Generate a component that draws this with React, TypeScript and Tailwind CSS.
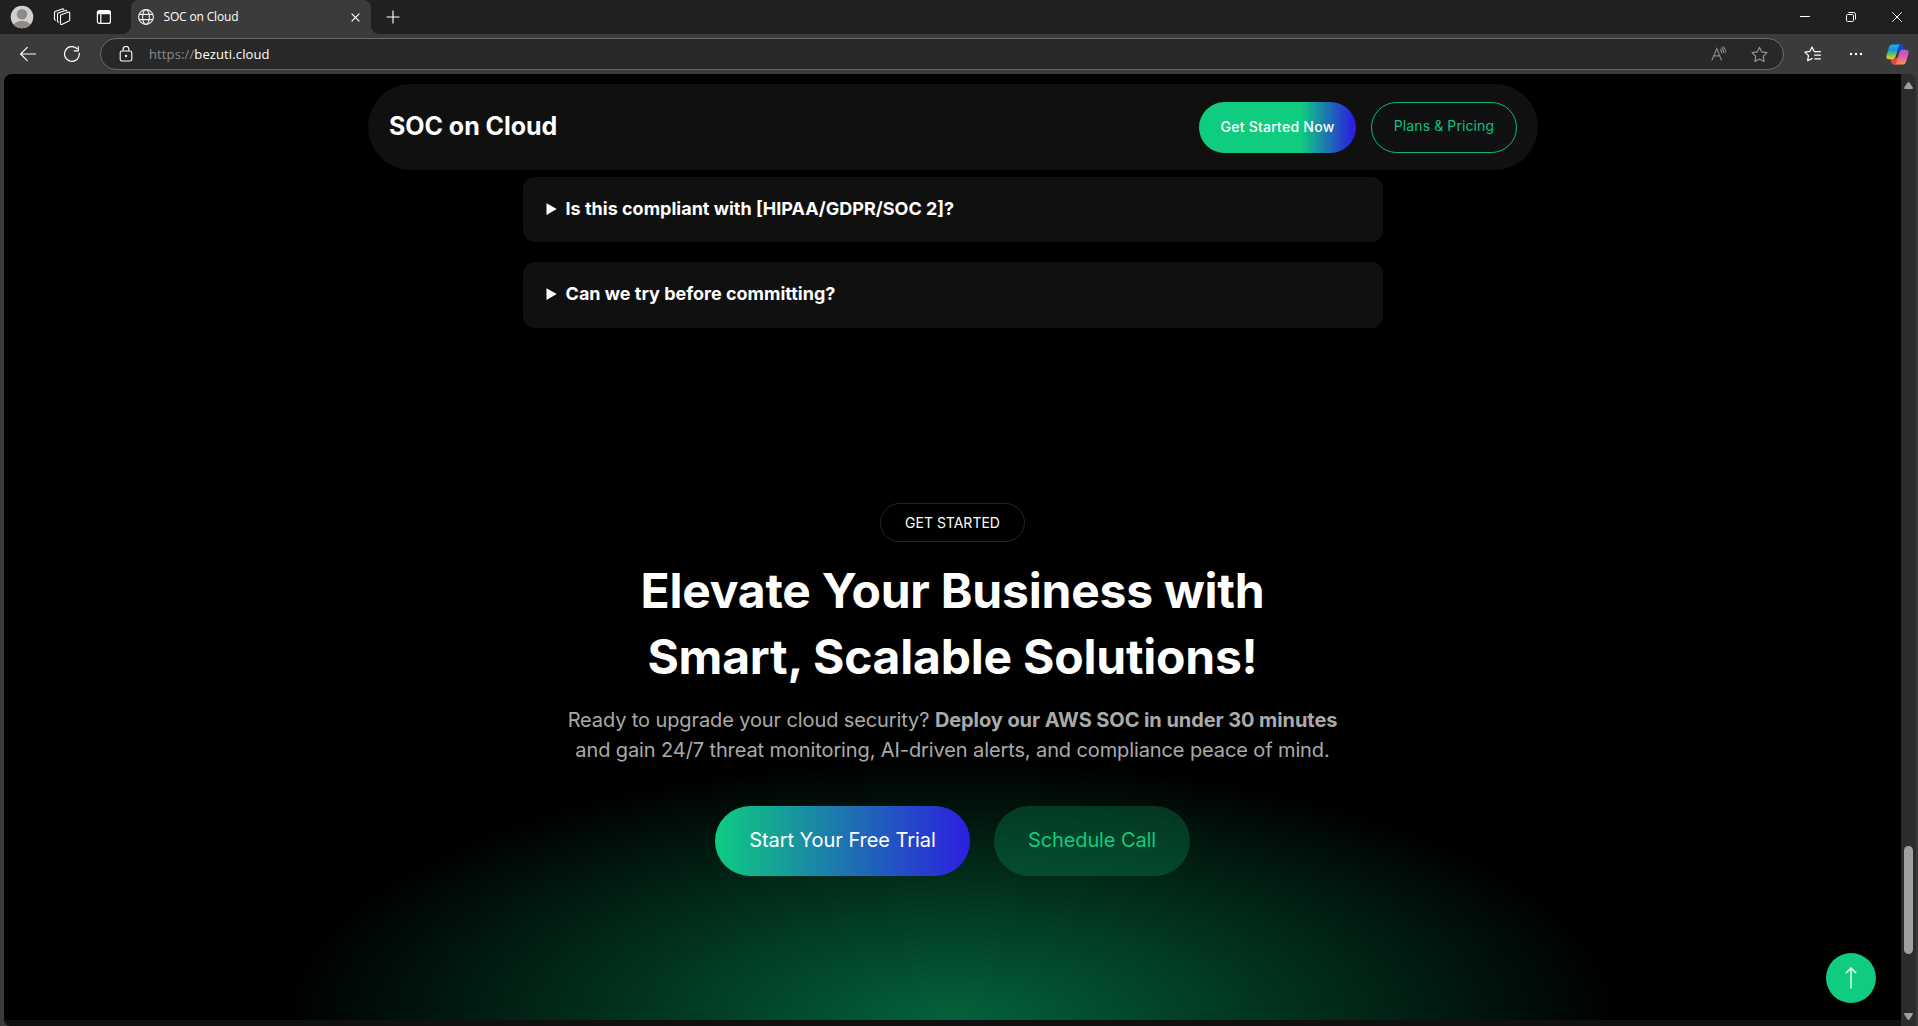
import React from "react";

function TabStrip() {
  return (
    <div className="flex h-[34px] shrink-0 items-center bg-[#202020] text-white">
      <svg className="ml-[10px] shrink-0" width="24" height="24" viewBox="0 0 24 24">
        <defs>
          <clipPath id="avatar">
            <circle cx="12" cy="12" r="11.3" />
          </clipPath>
        </defs>
        <circle cx="12" cy="12" r="11.3" fill="#d2d0ce" />
        <g clipPath="url(#avatar)" fill="#8e8a87">
          <circle cx="12" cy="9.3" r="5.2" />
          <path d="M3 24c0-6 3.5-8 9-8s9 2 9 8z" />
        </g>
      </svg>
      <svg className="ml-[19px] shrink-0" width="18" height="18" viewBox="0 0 18 18" fill="none" stroke="currentColor" strokeWidth="1.1" strokeLinejoin="round" strokeLinecap="round">
        <path d="M7.500 7.800Q7.500 7 8.200 6.700L15.500 4.100Q16.700 3.900 16.700 5V11.800Q16.700 12.700 15.900 13.100L8.800 16.400Q7.500 16.900 7.500 15.600z" />
        <path d="M5.600 14.200Q4.500 14 4.500 12.900V6.200Q4.500 5.400 5.200 5.100L12.300 2.400Q13.400 2.100 13.800 2.900" />
        <path d="M2.500 12.200Q1.500 11.900 1.500 11V4.700Q1.500 3.900 2.200 3.600L9.200 1Q10.200.7 10.700 1.400" />
      </svg>
      <svg className="ml-[25px] shrink-0" width="16" height="16" viewBox="0 0 16 16" fill="none" stroke="currentColor" strokeWidth="1.2">
        <rect x="1.400" y="1.600" width="13" height="12.800" rx="2" />
        <path d="M2 2.600h12v2H2z" fill="currentColor" />
        <path d="M4.800 5v9" />
      </svg>
      <div className="relative ml-[19px] flex h-[34px] w-[240px] shrink-0 items-center rounded-t-[8px] bg-[#3b3b3b]">
        <span className="absolute bottom-0 -left-2 size-2 bg-[radial-gradient(circle_at_0_0,#202020_7.5px,#3b3b3b_8px)]" />
        <span className="absolute -right-2 bottom-0 size-2 bg-[radial-gradient(circle_at_100%_0,#202020_7.5px,#3b3b3b_8px)]" />
        <svg className="ml-[7px] shrink-0" width="16" height="16" viewBox="0 0 16 16" fill="none" stroke="#f0f0f0" strokeWidth="1.1">
          <circle cx="8" cy="8" r="7.4" />
          <ellipse cx="8" cy="8" rx="3.4" ry="7.4" />
          <path d="M1.2 5.4h13.6M1.2 10.6h13.6" />
        </svg>
        <span className="ml-[9.5px] flex-1 font-['Open_Sans',sans-serif] text-[12px] leading-4 tracking-[-0.16px] whitespace-nowrap">SOC on Cloud</span>
        <svg className="mt-px mr-[11px] shrink-0" width="9" height="9" viewBox="0 0 9 9" stroke="currentColor" strokeWidth="1.2">
          <path d="m.6.6 7.8 7.8M8.4.6.6 8.4" />
        </svg>
      </div>
      <svg className="ml-[14.5px] shrink-0" width="14" height="14" viewBox="0 0 14 14" stroke="currentColor" strokeWidth="1.1">
        <path d="M7 .5v13M.5 7h13" />
      </svg>
      <div className="ml-auto flex items-center">
        <svg width="10" height="10" viewBox="0 0 10 10" stroke="currentColor">
          <path d="M0 4.5h10" />
        </svg>
        <svg className="ml-9" width="10" height="10" viewBox="0 0 10 10" fill="none" stroke="currentColor">
          <rect x=".5" y="2.5" width="7" height="7" rx="1.2" />
          <path d="M2.4.5h5.3A1.8 1.8 0 0 1 9.5 2.3v5.3" />
        </svg>
        <svg className="mr-4 ml-9" width="10" height="10" viewBox="0 0 10 10" stroke="currentColor">
          <path d="m.3.3 9.4 9.4M9.7.3.3 9.7" />
        </svg>
      </div>
    </div>
  );
}

const STAR = "M8 1.2 10.1 5.6l4.9.7-3.5 3.4.8 4.9L8 12.3l-4.3 2.3.8-4.9L1 6.3l4.9-.7z";

function Toolbar() {
  return (
    <div className="flex h-10 shrink-0 items-center bg-[#3b3b3b] text-white">
      <svg className="ml-5 shrink-0" width="16" height="16" viewBox="0 0 16 16" fill="none" stroke="currentColor" strokeWidth="1.1" strokeLinecap="round" strokeLinejoin="round">
        <path d="M15.5 8H.6M7.3 1.3.6 8l6.7 6.7" />
      </svg>
      <svg className="ml-[28px] shrink-0" width="16" height="16" viewBox="0 0 16 16" fill="none" stroke="currentColor" strokeWidth="1.2" strokeLinecap="round">
        <path d="M15.3 7.3A7.4 7.4 0 1 1 12.9 2.5M14.300.7v4.200H10.200" />
      </svg>
      <div className="ml-5 flex h-8 w-[1684px] shrink-0 items-center rounded-full border border-[#6a6a6a] bg-[#282828]">
        <svg className="ml-[18px] shrink-0" width="14" height="16" viewBox="0 0 14 16" fill="none" stroke="currentColor" strokeWidth="1.1">
          <rect x="1.2" y="5" width="11.6" height="10" rx="1.8" />
          <path d="M4.1 5V3.4a2.9 2.9 0 0 1 5.8 0V5" />
          <circle cx="7" cy="10" r=".6" fill="currentColor" />
        </svg>
        <span className="ml-[16px] font-['Open_Sans',sans-serif] text-[13px] leading-5 tracking-[0.12px] text-white">
          <span className="text-[#8a8a8a]">https://</span>bezuti.cloud
        </span>
        <svg className="ml-auto shrink-0" width="16" height="16" viewBox="0 0 16 16" fill="none" stroke="#8c8c8c" strokeWidth="1.1" strokeLinecap="round">
          <path d="M1 14 5.800 2.500l4.600 11.500M2.700 9.900h6.200" />
          <path d="M9.300 3.600a5 5 0 0 1 1.500 3.400M10.600 1.900a8 8 0 0 1 2.300 4.900M12.200.8a10 10 0 0 1 2.600 5.200" />
        </svg>
        <svg className="mr-[15px] ml-[24px] shrink-0" width="17" height="17" viewBox="0 0 16 16" fill="none" stroke="#969696" strokeWidth="1.1" strokeLinejoin="round">
          <path d={STAR} />
        </svg>
      </div>
      <svg className="ml-5 shrink-0" width="17" height="17" viewBox="0 0 17 17" fill="none" stroke="currentColor" strokeWidth="1.2" strokeLinejoin="round" strokeLinecap="round">
        <path d="M12 5.6 10.2 5.4 8 1 5.8 5.4.9 6.1l3.6 3.6-.9 5L8 12.6" />
        <path d="M10.7 5.7h5.7M10.7 9.2h5.7M10.7 12.8h5.7" />
      </svg>
      <svg className="ml-7 shrink-0" width="14" height="4" viewBox="0 0 14 4" fill="currentColor">
        <circle cx="2" cy="2" r="1.2" />
        <circle cx="7" cy="2" r="1.2" />
        <circle cx="12" cy="2" r="1.2" />
      </svg>
      <svg className="ml-[23px] shrink-0" width="23" height="21" viewBox="0 0 23 21">
        <defs>
          <linearGradient id="cpA" x1="0" y1="0" x2="0" y2="1">
            <stop offset="0" stopColor="#1fb6f2" />
            <stop offset=".35" stopColor="#1692dc" />
            <stop offset=".65" stopColor="#5fbf6a" />
            <stop offset="1" stopColor="#f5cf1b" />
          </linearGradient>
          <linearGradient id="cpB" x1="0" y1="0" x2="0" y2="1">
            <stop offset="0" stopColor="#9b5cf0" />
            <stop offset=".45" stopColor="#e557a5" />
            <stop offset="1" stopColor="#ff9556" />
          </linearGradient>
        </defs>
        <path d="M11 .5h4.500c1 0 1.500.6 1.800 1.500L18.500 6h-4l-3 2z" fill="#1746c9" />
        <path d="M12 20.500H7.500c-1 0-1.600-.7-1.900-1.500L4.500 15h4l3-2z" fill="#f0452d" />
        <path d="M6.500.5h8c-1.200.3-1.700 1.200-2 2.200L9.900 12c-.5 1.900-1.700 3.300-3.500 3.300H3.200C.8 15.300-.1 13.700.5 11.400L2.900 3.600C3.500 1.700 4.500.5 6.500.5z" fill="url(#cpA)" />
        <path d="M16.500 20.500h-8c1.200-.3 1.700-1.200 2-2.200L13.100 9c.5-1.900 1.700-3.300 3.500-3.300h3.200c2.400 0 3.300 1.600 2.700 3.900l-2.400 7.800c-.6 1.900-1.600 3.100-3.600 3.100z" fill="url(#cpB)" />
      </svg>
    </div>
  );
}

function SiteHeader() {
  return (
    <header className="mt-[10px] flex h-[86px] w-[1170px] items-center rounded-full bg-[#101010] pr-[20.5px] pl-[21.5px]">
      <span className="mb-[2px] text-[25px] leading-8 font-bold tracking-[-0.05px] text-white">SOC on Cloud</span>
      <a className="ml-auto flex h-[51px] w-[157px] items-center justify-center rounded-full bg-[linear-gradient(90deg,#0fcc80_65%,#2b1fe0_98%)] pb-[2px] text-[14px] font-medium tracking-[0.25px] text-white">
        Get Started Now
      </a>
      <a className="ml-[15px] flex h-[51px] w-[146px] items-center justify-center rounded-full border border-[#13b877] bg-[#111114] pb-[3px] text-[14px] tracking-[0.1px] text-[#12c07b]">
        Plans &amp; Pricing
      </a>
    </header>
  );
}

function Question({ children }: { children: React.ReactNode }) {
  return (
    <details className="h-[65.6px] rounded-[12px] bg-[#101010] px-[24px] pt-[18.4px]">
      <summary className="text-[18px] leading-[27px] font-bold text-white">{children}</summary>
    </details>
  );
}

function CallToAction() {
  return (
    <section className="flex w-full flex-1 flex-col items-center bg-[radial-gradient(668px_262px_at_50%_100%,#03633b,transparent)] pt-[175px] text-center">
      <span className="flex h-[39px] w-[145px] items-center justify-center rounded-full border border-[#262626] text-[14px] text-white">GET STARTED</span>
      <h2 className="mt-[16px] text-[48px] leading-[66px] font-bold tracking-[-0.22px] text-white">
        Elevate Your Business with
        <br />
        Smart, Scalable Solutions!
      </h2>
      <p className="mt-[15px] text-[20px] leading-[30px] tracking-[-0.11px] text-[#aaaaaa]">
        Ready to upgrade your cloud security? <strong className="font-bold tracking-[-0.08px]">Deploy our AWS SOC in under 30 minutes</strong>
        <br />
        and gain 24/7 threat monitoring, AI-driven alerts, and compliance peace of mind.
      </p>
      <div className="mt-[41px] flex gap-6 text-[20px] tracking-[-0.1px]">
        <a className="flex h-[70px] w-[255px] items-center justify-center rounded-full bg-[linear-gradient(90deg,#0fcc80,#2b1fe0)] pb-[2px] tracking-[-0.05px] text-white">Start Your Free Trial</a>
        <a className="flex h-[70px] w-[196px] items-center justify-center rounded-full bg-[#0fcc80]/22 pb-[2px] text-[#0fcc80]">Schedule Call</a>
      </div>
    </section>
  );
}

function Scrollbar() {
  return (
    <div className="flex w-[15px] shrink-0 flex-col items-center rounded-tr-[8px] bg-[#2c2c2c] pt-[8px] pb-[6px]">
      <svg width="9" height="7" viewBox="0 0 9 7" fill="#9f9f9f">
        <path d="M3.600.6a1.200 1.200 0 0 1 1.800 0L8.800 5.400Q9.200 7 8 7H1Q-.2 7 .2 5.400z" />
      </svg>
      <div className="mt-[757px] h-[108px] w-[9px] rounded-full bg-[#9f9f9f]" />
      <svg className="mt-auto" width="9" height="7" viewBox="0 0 9 7" fill="#9f9f9f">
        <path d="M3.600 6.400a1.200 1.200 0 0 0 1.800 0L8.800 1.600Q9.200 0 8 0H1Q-.2 0 .2 1.600z" />
      </svg>
    </div>
  );
}

export default function App() {
  return (
    <div className="flex h-[1026px] w-[1918px] flex-col overflow-hidden bg-[#3b3b3b] font-['Inter',sans-serif]">
      <TabStrip />
      <Toolbar />
      <div className="flex min-h-0 flex-1 pr-[2px] pl-1">
        <main className="relative flex min-w-0 flex-1 flex-col items-center rounded-tl-[8px] rounded-bl-[8px] bg-black">
          <SiteHeader />
          <div className="mt-[6.5px] flex w-[860px] flex-col gap-5">
            <Question>Is this compliant with [HIPAA/GDPR/SOC 2]?</Question>
            <Question>Can we try before committing?</Question>
          </div>
          <CallToAction />
          <footer className="h-[6px] w-full shrink-0 rounded-bl-[6px] bg-[#101010]" />
          <a className="absolute right-[25px] bottom-[23px] flex size-[50px] items-center justify-center rounded-full bg-[#0fcc80]">
            <svg width="12" height="22" viewBox="0 0 12 22" fill="none" stroke="#e9fff5" strokeWidth="1.500">
              <path d="M6 21.500V1M.8 6.300 6 1l5.200 5.300" />
            </svg>
          </a>
        </main>
        <Scrollbar />
      </div>
    </div>
  );
}
